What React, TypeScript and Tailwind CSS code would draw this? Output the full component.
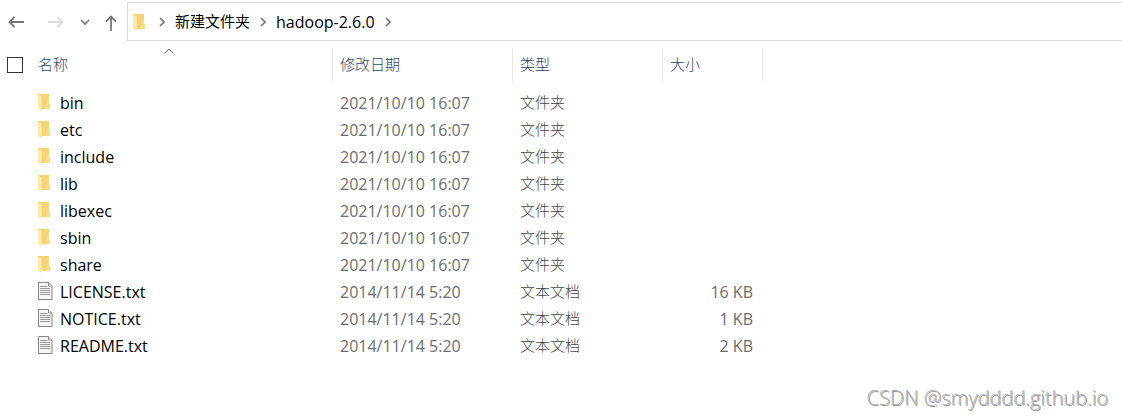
interface Entry {
  name: string;
  modified: string;
  kind: 'folder' | 'text';
  size?: string;
}

const entries: Entry[] = [
  { name: 'bin', modified: '2021/10/10 16:07', kind: 'folder' },
  { name: 'etc', modified: '2021/10/10 16:07', kind: 'folder' },
  { name: 'include', modified: '2021/10/10 16:07', kind: 'folder' },
  { name: 'lib', modified: '2021/10/10 16:07', kind: 'folder' },
  { name: 'libexec', modified: '2021/10/10 16:07', kind: 'folder' },
  { name: 'sbin', modified: '2021/10/10 16:07', kind: 'folder' },
  { name: 'share', modified: '2021/10/10 16:07', kind: 'folder' },
  { name: 'LICENSE.txt', modified: '2014/11/14 5:20', kind: 'text', size: '16 KB' },
  { name: 'NOTICE.txt', modified: '2014/11/14 5:20', kind: 'text', size: '1 KB' },
  { name: 'README.txt', modified: '2014/11/14 5:20', kind: 'text', size: '2 KB' },
];

function FolderIcon() {
  return (
    <svg width="14" height="18" viewBox="0 -1 14 18" aria-hidden="true" className="shrink-0">
      <path d="M0 0H11V10H12V15H3L0 14Z" fill="#f5d478" />
      <path d="M7 15L11 3V10H12V15Z" fill="#fadc80" />
      <path d="M0 1L3 2L4 3V15L3 17L0 15Z" fill="#ffe9a8" />
      <path d="M3 2L4 3V15L3 16Z" fill="#fde39a" />
    </svg>
  );
}

function TextFileIcon() {
  return (
    <svg width="15" height="18" viewBox="0 0 15 18" aria-hidden="true" className="shrink-0">
      <path d="M0.5 0.5H10.5L14 4V17.5H0.5Z" fill="#f6f6f6" stroke="#858585" />
      <path d="M10.5 0.5V4H14" fill="#fff" stroke="#858585" />
      <path d="M2 4.5H9M2 6.5H12M2 8.5H12M2 10.5H12M2 12.5H12" stroke="#999" />
    </svg>
  );
}

function Chevron() {
  return (
    <svg width="6" height="10" viewBox="0 0 6 10" fill="none" aria-hidden="true" className="shrink-0">
      <path d="M1 1L5 5L1 9" stroke="#777" strokeWidth="1.6" />
    </svg>
  );
}

function HorizontalArrow({ flipped = false }: { flipped?: boolean }) {
  return (
    <svg width="16" height="12" viewBox="0 0 16 12" fill="none" stroke="currentColor" strokeWidth="1.8" aria-hidden="true">
      <path d={flipped ? 'M0 6H15M9.5 1L14.5 6L9.5 11' : 'M16 6H1M6.5 1L1.5 6L6.5 11'} />
    </svg>
  );
}

function NavBar() {
  return (
    <header className="flex h-[41px] pt-[2px]">
      <nav className="flex w-[127px] shrink-0 items-center pl-2 text-[#777]" aria-label="导航">
        <button type="button" aria-label="后退">
          <HorizontalArrow />
        </button>
        <button type="button" aria-label="前进" disabled className="ml-6 text-[#dcdcdc]">
          <HorizontalArrow flipped />
        </button>
        <button type="button" aria-label="最近浏览的位置" className="ml-4">
          <svg width="10" height="6" viewBox="0 0 10 6" fill="none" aria-hidden="true">
            <path d="M1 1L5 5L9 1" stroke="currentColor" strokeWidth="1.7" />
          </svg>
        </button>
        <button type="button" aria-label="上移" className="ml-[15px] pt-[2px]">
          <svg width="12" height="16" viewBox="0 0 12 16" fill="none" aria-hidden="true">
            <path d="M6 16V1.5M1 6.5L6 1.5L11 6.5" stroke="currentColor" strokeWidth="1.8" />
          </svg>
        </button>
      </nav>
      <div className="flex flex-1 items-center border-y border-l border-[#d9d9d9] pl-[5px] text-black">
        <FolderIcon />
        <span className="ml-3 flex items-center gap-[10px]">
          <Chevron />
          <button type="button" className="text-[15px]">新建文件夹</button>
          <Chevron />
          <button type="button" className="text-base">hadoop-2.6.0</button>
          <Chevron />
        </span>
      </div>
    </header>
  );
}

function FileTable() {
  return (
    <table className="mt-[7px] w-full table-fixed border-collapse text-left">
      <colgroup>
        <col className="w-[333px]" />
        <col className="w-[180px]" />
        <col className="w-[150px]" />
        <col className="w-[100px]" />
        <col />
      </colgroup>
      <thead>
        <tr className="h-[33px] text-[15px] text-[#2c4464] [&>th]:p-0 [&>th]:font-light">
          <th className="relative" aria-sort="ascending">
            <div className="flex h-[33px] items-center border-r border-[#e5e5e5] pl-[7px]">
              <input
                type="checkbox"
                aria-label="全选"
                className="size-4 appearance-none border border-[#333] bg-white checked:bg-[#333]"
              />
              <span className="ml-[15px]">名称</span>
            </div>
            <svg width="10" height="6" viewBox="0 0 10 6" fill="none" aria-hidden="true" className="absolute top-0 left-[164px]">
              <path d="M0.5 5.5L5 1L9.5 5.5" stroke="#666" />
            </svg>
          </th>
          {['修改日期', '类型', '大小'].map((label) => (
            <th key={label}>
              <div className="flex h-[33px] items-center border-r border-[#e5e5e5] pl-[7px]">{label}</div>
            </th>
          ))}
          <td />
        </tr>
      </thead>
      <tbody className="before:block before:h-2 before:content-['']">
        {entries.map((entry) => (
          <tr key={entry.name} className="h-[27px] text-[#6d6d6d] [&>td]:py-0">
            <td className="pr-0 pl-[38px]">
              <div className="flex items-center text-black">
                <span className="flex w-[22px] pb-[2px]">
                  {entry.kind === 'folder' ? <FolderIcon /> : <TextFileIcon />}
                </span>
                <span className="text-base">{entry.name}</span>
              </div>
            </td>
            <td className="pl-[7px] text-base">{entry.modified}</td>
            <td className="pl-[7px] text-[15px] font-light text-[#444]">
              {entry.kind === 'folder' ? '文件夹' : '文本文档'}
            </td>
            <td className="pr-[10px] text-right text-base">{entry.size}</td>
            <td />
          </tr>
        ))}
      </tbody>
    </table>
  );
}

export default function App() {
  return (
    <main className="bg-white font-['Open_Sans','Noto_Sans_CJK_SC',sans-serif]">
      <NavBar />
      <FileTable />
      <footer className="mt-[25px] pr-[14px] text-right text-xl font-light text-[#b4b4b4] [text-shadow:1px_1px_0_#999]">
        CSDN @smydddd.github.io
      </footer>
    </main>
  );
}
